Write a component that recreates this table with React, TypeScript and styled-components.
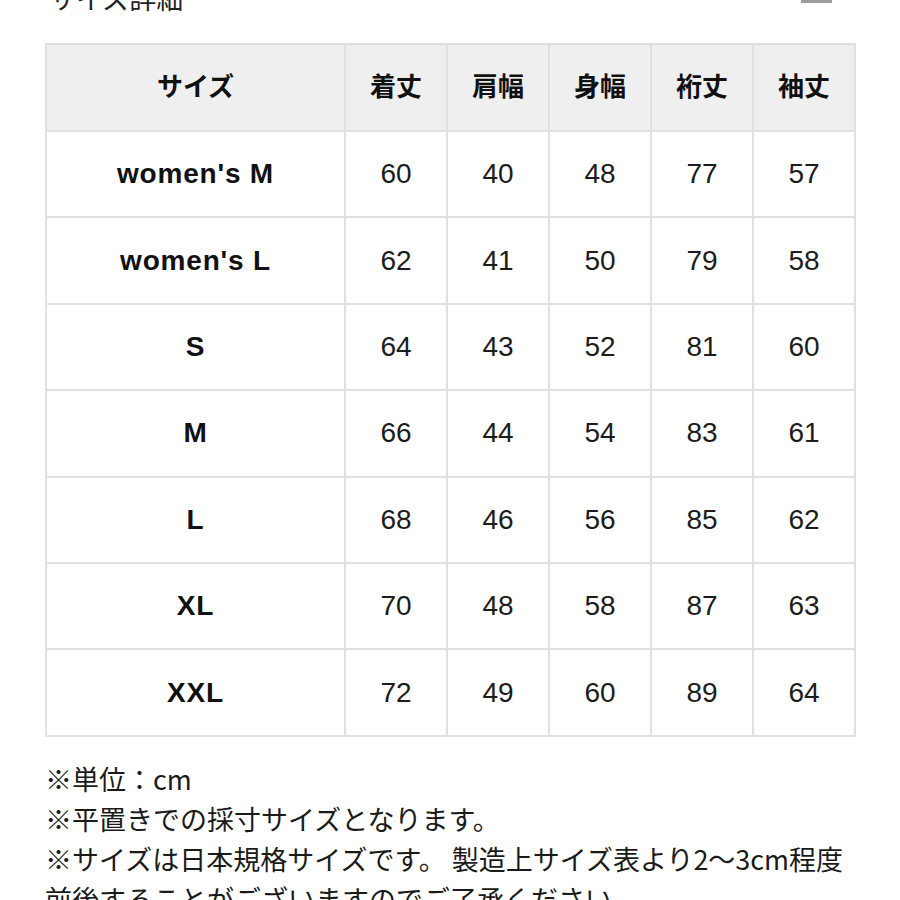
import styled, { createGlobalStyle } from "styled-components";

const GlobalStyle = createGlobalStyle`
  html, body {
    margin: 0;
    padding: 0;
    background: #ffffff;
    overflow: hidden;
  }
  body {
    font-family: "Noto Sans CJK JP", "Noto Sans", sans-serif;
    color: #1a1a1a;
  }
`;

const columns = ["着丈", "肩幅", "身幅", "裄丈", "袖丈"];

const sizes: { name: string; values: number[] }[] = [
  { name: "women's M", values: [60, 40, 48, 77, 57] },
  { name: "women's L", values: [62, 41, 50, 79, 58] },
  { name: "S", values: [64, 43, 52, 81, 60] },
  { name: "M", values: [66, 44, 54, 83, 61] },
  { name: "L", values: [68, 46, 56, 85, 62] },
  { name: "XL", values: [70, 48, 58, 87, 63] },
  { name: "XXL", values: [72, 49, 60, 89, 64] },
];

const notes = [
  "※単位：cm",
  "※平置きでの採寸サイズとなります。",
  "※サイズは日本規格サイズです。 製造上サイズ表より2〜3cm程度",
  "前後することがございますのでご了承ください。",
];

export default function App() {
  return (
    <>
      <GlobalStyle />
      <Page>
        <TitleRow>
          <Title>サイズ詳細</Title>
          <Toggle />
        </TitleRow>
        <Table>
          <colgroup>
            <col style={{ width: 299 }} />
            {columns.map((c) => (
              <col key={c} style={{ width: 102 }} />
            ))}
          </colgroup>
          <thead>
            <tr>
              <HeadCell>サイズ</HeadCell>
              {columns.map((c) => (
                <HeadCell key={c}>{c}</HeadCell>
              ))}
            </tr>
          </thead>
          <tbody>
            {sizes.map((s) => (
              <tr key={s.name}>
                <NameCell>{s.name}</NameCell>
                {s.values.map((v, i) => (
                  <ValueCell key={i}>{v}</ValueCell>
                ))}
              </tr>
            ))}
          </tbody>
        </Table>
        <Notes>
          {notes.map((n) => (
            <Note key={n}>{n}</Note>
          ))}
        </Notes>
      </Page>
    </>
  );
}

const Page = styled.div`
  width: 900px;
  height: 900px;
  padding: 0 45px;
  box-sizing: border-box;
  overflow: hidden;
`;

const TitleRow = styled.div`
  display: flex;
  justify-content: space-between;
  align-items: flex-end;
  margin-top: -15px;
  height: 26px;
  padding-right: 23px;
`;

const Title = styled.div`
  font-size: 27px;
  line-height: 26px;
  color: #222;
  padding-left: 4px;
`;

const Toggle = styled.span`
  display: block;
  width: 31px;
  height: 3px;
  margin-bottom: 8px;
  background: #9c9c9c;
`;

const Table = styled.table`
  margin-top: 32px;
  width: 810px;
  table-layout: fixed;
  border-collapse: collapse;
  border: 2px solid #dddddd;
`;

const Cell = styled.td`
  height: 84.4px;
  padding: 0;
  border: 2px solid #e0e0e0;
  text-align: center;
  vertical-align: middle;
  color: #111;
`;

const HeadCell = styled(Cell).attrs({ as: "th" })`
  height: 79px;
  padding: 0 0 6px;
  background: #efefef;
  font-family: "Noto Sans CJK JP", sans-serif;
  font-weight: 700;
  font-size: 26px;
`;

const NameCell = styled(Cell)`
  font-family: "Liberation Sans", Arial, sans-serif;
  font-weight: 700;
  font-size: 28px;
  letter-spacing: 0.8px;
`;

const ValueCell = styled(Cell)`
  font-family: "Liberation Sans", Arial, sans-serif;
  font-size: 28px;
  color: #1c1c1c;
`;

const Notes = styled.div`
  margin-top: 22px;
`;

const Note = styled.div`
  font-size: 27px;
  line-height: 40px;
  color: #1a1a1a;
  white-space: nowrap;
`;
